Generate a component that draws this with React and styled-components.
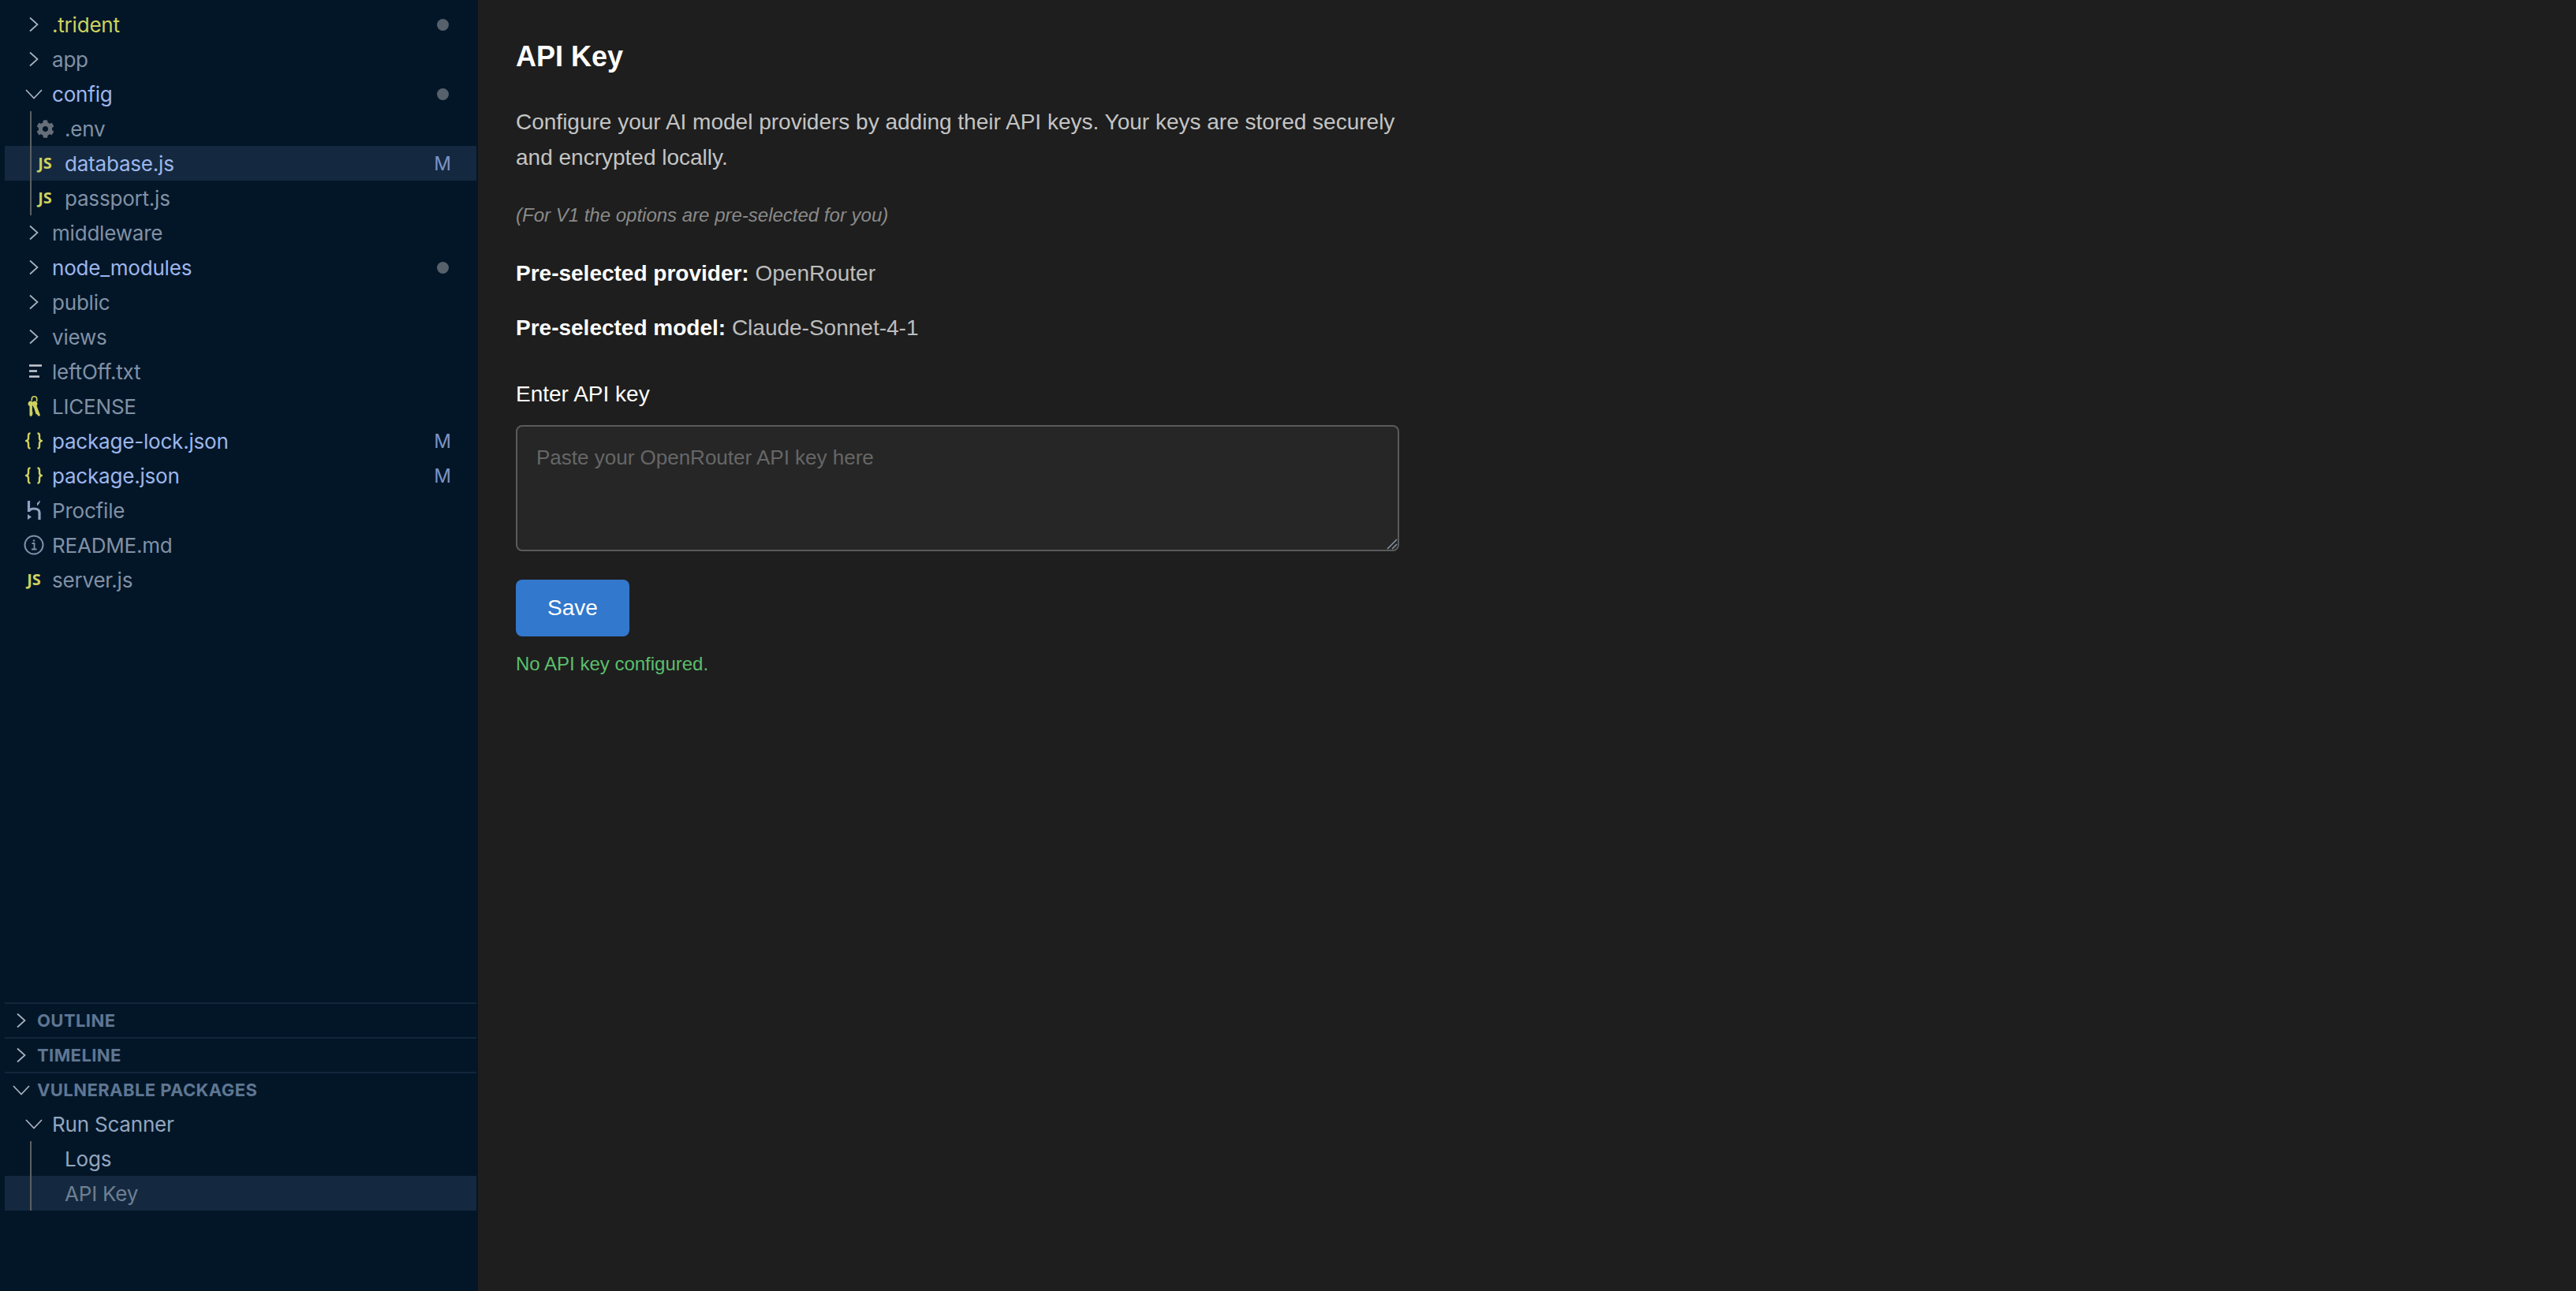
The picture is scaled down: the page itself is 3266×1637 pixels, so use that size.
import styled, { createGlobalStyle } from 'styled-components';
import { FaCog } from 'react-icons/fa';

const GlobalStyle = createGlobalStyle`
  html, body {
    margin: 0;
    padding: 0;
    background: #1e1e1e;
  }
  * {
    box-sizing: border-box;
  }
`;

const Page = styled.div`
  display: flex;
  width: 100%;
  height: 1637px;
  overflow: hidden;
`;

const Sidebar = styled.aside`
  display: flex;
  flex-direction: column;
  width: 606px;
  flex-shrink: 0;
  padding: 9px 2px 102px 6px;
  background: #031628;
  font-family: Inter, "Noto Sans", sans-serif;
`;

const FileTree = styled.div`
  flex: 1;
`;

const Group = styled.div`
  position: relative;

  &::before {
    content: '';
    position: absolute;
    left: 32px;
    top: 0;
    bottom: 0;
    width: 2px;
    background: #5b5f63;
    z-index: 1;
  }
`;

const Row = styled.div`
  display: flex;
  align-items: center;
  height: 44px;
  padding-left: ${p => (p.$depth ? 38 : 22)}px;
  padding-right: 33px;
  background: ${p => (p.$active ? '#14293f' : 'transparent')};
`;

const IconSlot = styled.span`
  display: flex;
  align-items: center;
  justify-content: center;
  flex-shrink: 0;
  width: 30px;
  height: 44px;
  margin-right: 8px;
`;

const Name = styled.span`
  flex: 1;
  padding-top: 2px;
  font-size: 26px;
  line-height: 44px;
  letter-spacing: -0.2px;
  white-space: nowrap;
  color: ${p => p.$color};
`;

const Badge = styled.span`
  display: flex;
  align-items: center;
  justify-content: center;
  width: 20px;
  font-size: 24px;
  font-weight: 400;
  color: #7b93c4;
`;

const Dot = styled.span`
  width: 15px;
  height: 15px;
  border-radius: 50%;
  background: #56616c;
`;

const JsGlyph = styled.span`
  font-family: "Noto Sans", Inter, sans-serif;
  font-size: 20px;
  font-weight: 700;
  line-height: 1;
  color: #cfd15e;
  transform: translateX(${p => (p.$nested ? -2 : 0)}px);
`;

const GearGlyph = styled(FaCog)`
  width: 23px;
  height: 23px;
  color: #666f79;
  transform: translateX(-2px);
`;

const PanelHeader = styled.div`
  display: flex;
  align-items: center;
  height: 44px;
  border-top: 2px solid #12263a;
  padding-left: 6px;
`;

const PanelSlot = styled.span`
  display: flex;
  align-items: center;
  justify-content: center;
  width: 30px;
  margin-right: 5px;
`;

const PanelTitle = styled.span`
  font-size: 22px;
  font-weight: 700;
  letter-spacing: 0.42px;
  color: #5f7692;
`;

const Main = styled.main`
  flex: 1;
  padding: 48px 0 0 48px;
  background: #1e1e1e;
  font-family: "Liberation Sans", Arial, sans-serif;
`;

const Content = styled.div`
  width: 1120px;
`;

const Title = styled.h2`
  margin: 0 0 37px;
  font-size: 36px;
  line-height: 48px;
  font-weight: 700;
  color: #ffffff;
`;

const Intro = styled.p`
  margin: 0 0 31px;
  font-size: 28px;
  line-height: 44.8px;
  color: #c4c4c4;
`;

const Note = styled.p`
  margin: 0 0 32px;
  font-size: 24px;
  line-height: 38px;
  font-style: italic;
  color: #8a8a8a;
`;

const Selected = styled.p`
  margin: 0 0 24px;
  font-size: 28px;
  line-height: 45px;
  color: #bdbdbd;

  strong {
    font-weight: 700;
    color: #ffffff;
  }
`;

const FieldLabel = styled.label`
  display: block;
  margin: 46px 0 23px;
  font-size: 28px;
  line-height: 32px;
  color: #ffffff;
`;

const InputWrap = styled.div`
  position: relative;
  width: 1120px;
  height: 160px;
`;

const KeyInput = styled.textarea`
  display: block;
  width: 100%;
  height: 100%;
  padding: 22px 24px;
  border: 2px solid #5a5a5a;
  border-radius: 8px;
  background: #262626;
  font-family: "Liberation Sans", Arial, sans-serif;
  font-size: 26px;
  line-height: 34px;
  color: #cccccc;
  outline: none;
  resize: none;

  &::placeholder {
    color: #666666;
  }
`;

const ResizeGrip = styled.svg`
  position: absolute;
  right: 2px;
  bottom: 2px;
`;

const SaveButton = styled.button`
  display: block;
  width: 144px;
  height: 72px;
  margin-top: 36px;
  border: none;
  border-radius: 8px;
  background: #3278cc;
  font-family: "Liberation Sans", Arial, sans-serif;
  font-size: 28px;
  color: #ffffff;
`;

const Status = styled.div`
  margin-top: 20px;
  font-size: 24px;
  line-height: 30px;
  color: #5bbf6c;
`;

const ChevronRight = ({ color = '#a9b3bf' }) => (
  <svg width="14" height="20" viewBox="0 0 14 20" fill="none">
    <path d="M2 1.500l9.500 8.500L2 18.500" stroke={color} strokeWidth="1.700" />
  </svg>
);

const ChevronDown = ({ color = '#a9b3bf' }) => (
  <svg width="22" height="14" viewBox="0 0 22 14" fill="none">
    <path d="M1 2l10 10.500L21 2" stroke={color} strokeWidth="1.700" />
  </svg>
);

const BracesIcon = () => (
  <svg width="22" height="22" viewBox="0 0 22 22" fill="none" stroke="#cfd15e" strokeWidth="2.400">
    <path d="M6.500 1.500c-2.500 0-2.500 1-2.500 3v3c0 2-.8 3-2.500 3.500 1.700.5 2.500 1.500 2.500 3.500v3c0 2 0 3 2.500 3" />
    <path d="M15.500 1.500c2.500 0 2.500 1 2.500 3v3c0 2 .8 3 2.500 3.500-1.700.5-2.500 1.500-2.500 3.500v3c0 2 0 3-2.500 3" />
  </svg>
);

const TextIcon = () => (
  <svg width="20" height="20" viewBox="0 0 20 20" fill="none" stroke="#c6cbd1" strokeWidth="2.600">
    <path d="M4 2.500h16M4 9.500h10M4 16.500h13" />
  </svg>
);

const KeysIcon = () => (
  <svg width="17" height="28" viewBox="0 0 17 28" fill="#cfd15e">
    <path d="M8.500 1a4 4 0 0 1 4 4v3h-1.600V5a2.400 2.400 0 0 0-4.800 0v2H4.500V5a4 4 0 0 1 4-4z" />
    <path d="M4 7.500c2 0 3.500 1.600 3.500 3.500 0 1.300-.6 2.400-1.600 3v7l1 1.500-1 1 .6 1.200L4 27.500l-1.500-2V14C1.300 13.400.5 12.300.5 11c0-1.900 1.500-3.500 3.500-3.500z" />
    <path d="M9 7.500c2 0 3.500 1.600 3.500 3.500 0 1-.4 1.800-1 2.500L16 25.500l-2 1.500-2.500-3-.8.500L8 16c-.8-.5-1-1.200-1-2V8z" />
  </svg>
);

const ProcfileIcon = () => (
  <svg width="18" height="26" viewBox="0 0 18 26" fill="none">
    <path d="M2.500 1v14c0-.5 1-4 6.500-4 5 0 7 2 7 5v9" stroke="#8fa3c0" strokeWidth="3.200" />
    <path d="M17 1c-.4 2.500-1.800 4.800-4 6.500V3.500C14.500 3 15.500 2 15.800 1z" fill="#8fa3c0" />
    <path d="M1 18l5 3.500L1 25z" fill="#8fa3c0" />
  </svg>
);

const InfoIcon = () => (
  <svg width="26" height="26" viewBox="0 0 26 26" fill="none" stroke="#7d90a9">
    <circle cx="13" cy="13" r="11.500" strokeWidth="2" />
    <path d="M10.500 11h3v7.500M10 18.500h6.500" strokeWidth="1.800" />
    <circle cx="13" cy="7.500" r="1.300" fill="#7d90a9" stroke="none" />
  </svg>
);

const COLORS = {
  plain: '#8191a5',
  changed: '#9db6ec',
  ignored: '#cdd35e',
  selected: '#6e7f93',
  logs: '#93a6bf',
};

const iconFor = (kind, nested) => {
  switch (kind) {
    case 'closed':
      return <ChevronRight />;
    case 'open':
      return <ChevronDown />;
    case 'js':
      return <JsGlyph $nested={nested}>JS</JsGlyph>;
    case 'gear':
      return <GearGlyph />;
    case 'json':
      return <BracesIcon />;
    case 'text':
      return <TextIcon />;
    case 'keys':
      return <KeysIcon />;
    case 'proc':
      return <ProcfileIcon />;
    case 'info':
      return <InfoIcon />;
    default:
      return null;
  }
};

const TreeRow = ({ icon, label, color = 'plain', depth = 0, active, mark }) => (
  <Row $depth={depth} $active={active}>
    <IconSlot>{iconFor(icon, depth > 0)}</IconSlot>
    <Name $color={COLORS[color]}>{label}</Name>
    {mark === 'dot' && <Badge><Dot /></Badge>}
    {mark === 'M' && <Badge>M</Badge>}
  </Row>
);

const App = () => (
  <Page>
    <GlobalStyle />
    <Sidebar>
      <FileTree>
        <TreeRow icon="closed" label=".trident" color="ignored" mark="dot" />
        <TreeRow icon="closed" label="app" />
        <TreeRow icon="open" label="config" color="changed" mark="dot" />
        <Group>
          <TreeRow depth={1} icon="gear" label=".env" />
          <TreeRow depth={1} icon="js" label="database.js" color="changed" active mark="M" />
          <TreeRow depth={1} icon="js" label="passport.js" />
        </Group>
        <TreeRow icon="closed" label="middleware" />
        <TreeRow icon="closed" label="node_modules" color="changed" mark="dot" />
        <TreeRow icon="closed" label="public" />
        <TreeRow icon="closed" label="views" />
        <TreeRow icon="text" label="leftOff.txt" />
        <TreeRow icon="keys" label="LICENSE" />
        <TreeRow icon="json" label="package-lock.json" color="changed" mark="M" />
        <TreeRow icon="json" label="package.json" color="changed" mark="M" />
        <TreeRow icon="proc" label="Procfile" />
        <TreeRow icon="info" label="README.md" />
        <TreeRow icon="js" label="server.js" />
      </FileTree>
      <PanelHeader>
        <PanelSlot><ChevronRight /></PanelSlot>
        <PanelTitle>OUTLINE</PanelTitle>
      </PanelHeader>
      <PanelHeader>
        <PanelSlot><ChevronRight /></PanelSlot>
        <PanelTitle>TIMELINE</PanelTitle>
      </PanelHeader>
      <PanelHeader>
        <PanelSlot><ChevronDown /></PanelSlot>
        <PanelTitle>VULNERABLE PACKAGES</PanelTitle>
      </PanelHeader>
      <TreeRow icon="open" label="Run Scanner" color="logs" />
      <Group>
        <TreeRow depth={1} label="Logs" color="logs" />
        <TreeRow depth={1} label="API Key" color="selected" active />
      </Group>
    </Sidebar>
    <Main>
      <Content>
        <Title>API Key</Title>
        <Intro>
          Configure your AI model providers by adding their API keys. Your keys are stored securely and encrypted locally.
        </Intro>
        <Note>(For V1 the options are pre-selected for you)</Note>
        <Selected><strong>Pre-selected provider:</strong> OpenRouter</Selected>
        <Selected><strong>Pre-selected model:</strong> Claude-Sonnet-4-1</Selected>
        <FieldLabel htmlFor="api-key">Enter API key</FieldLabel>
        <InputWrap>
          <KeyInput id="api-key" placeholder="Paste your OpenRouter API key here" />
          <ResizeGrip width="14" height="14" viewBox="0 0 14 14" fill="none" stroke="#8a97a8" strokeWidth="1.500">
            <path d="M1 13L13 1M7 13l6-6" />
          </ResizeGrip>
        </InputWrap>
        <SaveButton>Save</SaveButton>
        <Status>No API key configured.</Status>
      </Content>
    </Main>
  </Page>
);

export default App;
